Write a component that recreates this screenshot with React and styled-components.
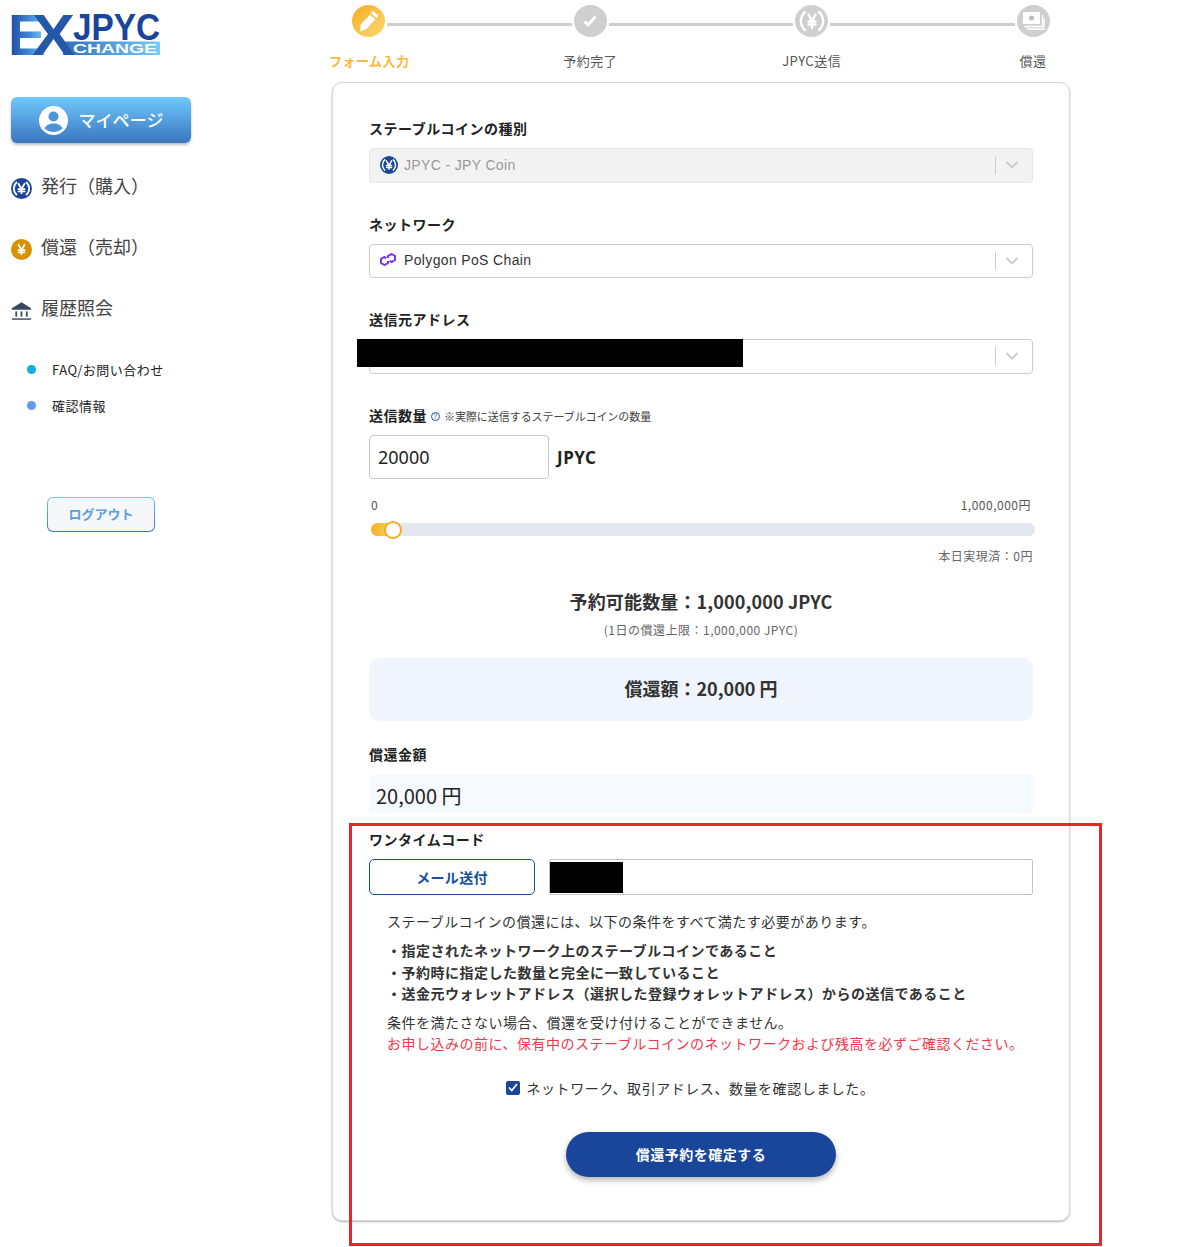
import styled, { createGlobalStyle } from "styled-components";
import { ChevronDown } from "lucide-react";

const FONT = `"Noto Sans CJK JP", "Noto Sans", sans-serif`;

const GlobalStyle = createGlobalStyle`
  body {
    margin: 0;
    background: #ffffff;
    font-family: ${FONT};
    color: #222222;
  }
`;

function YenMark({ color = "#ffffff" }) {
  return (
    <g fill="none" stroke={color} strokeWidth="2" strokeLinecap="round" strokeLinejoin="round">
      <path d="M8.500 6.500l3.500 6 3.500-6M12 12.500v5M8.500 12.800h7M8.500 15.400h7" />
    </g>
  );
}

function CoinIcon({ size = 21 }) {
  return (
    <svg width={size} height={size} viewBox="0 0 24 24">
      <circle cx="12" cy="12" r="12" fill="#1a4599" />
      <path d="M6.800 4.600a9.500 9.500 0 0 0 0 14.800M17.200 4.600a9.500 9.500 0 0 1 0 14.800" fill="none" stroke="#fff" strokeWidth="2" />
      <YenMark />
    </svg>
  );
}

function RedeemIcon() {
  return (
    <svg width="21" height="21" viewBox="0 0 24 24">
      <circle cx="12" cy="12" r="12" fill="#d99100" />
      <YenMark />
    </svg>
  );
}

function BankIcon() {
  return (
    <svg width="21" height="21" viewBox="0 0 24 24" fill="#34495e">
      <path d="M12 2.500L23 9.500V11H1V9.500z" />
      <rect x="5" y="13" width="2" height="6" />
      <rect x="11" y="13" width="2" height="6" />
      <rect x="17" y="13" width="2" height="6" />
      <rect x="1" y="21" width="22" height="1.600" />
    </svg>
  );
}

function UserIcon() {
  return (
    <svg width="29" height="29" viewBox="0 0 29 29">
      <circle cx="14.500" cy="14.500" r="14.500" fill="#ffffff" />
      <circle cx="14.500" cy="10.500" r="5" fill="#4c94d8" />
      <path d="M5.500 22.500c1.500-3.600 5-5 9-5s7.500 1.400 9 5c-2.400 2.300-5.600 3.500-9 3.500s-6.600-1.200-9-3.500z" fill="#4c94d8" />
    </svg>
  );
}

function PolygonIcon() {
  return (
    <PolygonSvg width="16" height="13" viewBox="0 0 16 13" fill="none" stroke="#7b2ff0" strokeWidth="2">
      <path d="M8 5V3L11.500 1L15 3V7L11.500 9L9.500 7.900" />
      <path d="M8 8V10L4.500 12L1 10V6L4.500 4L6.500 5.100" />
    </PolygonSvg>
  );
}

function StepGlyph({ kind }) {
  if (kind === "pencil") {
    return (
      <svg width="20" height="22" viewBox="0 0 20 22" fill="#ffffff">
        <path d="M14 1l5.500 4.500-2 2.500L12 3.500zM10.900 4.800l5.500 4.500-8.900 9.700-6.500 2.500.6-7z" />
      </svg>
    );
  }
  if (kind === "check") {
    return (
      <svg width="14" height="12" viewBox="0 0 14 12" fill="none" stroke="#ffffff" strokeWidth="2.800">
        <path d="M1.500 6.500L5 10L12.500 1.500" />
      </svg>
    );
  }
  if (kind === "yen") {
    return (
      <svg width="26" height="24" viewBox="0 0 26 24" fill="none" stroke="#ffffff" strokeWidth="2.400" strokeLinecap="round">
        <path d="M6 3a12 12 0 0 0 0 18M20 3a12 12 0 0 1 0 18M9.500 5.500L13 12l3.500-6.500M13 12v7M9.500 12.500h7M9.500 15.500h7" />
      </svg>
    );
  }
  return (
    <svg width="23" height="20" viewBox="0 0 23 20" fill="none">
      <rect x="1" y="1" width="17" height="12" fill="#ffffff" />
      <circle cx="9.500" cy="7" r="2.500" fill="#bdbdbd" />
      <path d="M20.500 4v11.500H2.500M22 7v11H5" stroke="#ffffff" strokeWidth="1.300" />
    </svg>
  );
}

function Logo() {
  return (
    <LogoSvg width="150" height="42" viewBox="0 0 150 42">
      <defs>
        <linearGradient id="logoE" x1="0" x2="1" y1="0" y2="0">
          <stop offset="0" stopColor="#1a4599" />
          <stop offset="0.55" stopColor="#3f86d4" />
          <stop offset="1" stopColor="#74ccff" />
        </linearGradient>
        <linearGradient id="logoBand" x1="0" x2="1" y1="0" y2="0">
          <stop offset="0" stopColor="#2f6fbd" />
          <stop offset="1" stopColor="#74ccff" />
        </linearGradient>
      </defs>
      <text x="-3" y="42" fontFamily="Liberation Sans" fontWeight="700" fontSize="58" fill="url(#logoE)" textLength="38" lengthAdjust="spacingAndGlyphs">E</text>
      <rect x="52" y="28.500" width="97" height="13.500" fill="url(#logoBand)" />
      <text x="21" y="42" fontFamily="Liberation Sans" fontWeight="700" fontSize="58" fill="#2458a8" textLength="43" lengthAdjust="spacingAndGlyphs">X</text>
      <text x="62" y="26.500" fontFamily="Liberation Sans" fontWeight="700" fontSize="37" fill="#1a4599" textLength="87" lengthAdjust="spacingAndGlyphs">JPYC</text>
      <text x="62" y="40" fontFamily="Liberation Sans" fontWeight="700" fontSize="13" fill="#ffffff" textLength="84" lengthAdjust="spacingAndGlyphs">CHANGE</text>
    </LogoSvg>
  );
}

function SelectField({ label, icon, value, disabled }) {
  return (
    <Field>
      <FieldLabel>{label}</FieldLabel>
      <SelectBox $disabled={disabled}>
        <SelectIcon>{icon}</SelectIcon>
        <SelectValue $disabled={disabled}>{value}</SelectValue>
        <SelectArrow>
          <ChevronDown size={20} strokeWidth={2.2} />
        </SelectArrow>
      </SelectBox>
    </Field>
  );
}

const steps = [
  { glyph: "pencil", label: "フォーム入力", active: true },
  { glyph: "check", label: "予約完了" },
  { glyph: "yen", label: "JPYC送信" },
  { glyph: "money", label: "償還" },
];

export default function App() {
  return (
    <Page>
      <GlobalStyle />
      <Sidebar>
        <Logo />
        <MyPageButton>
          <UserIcon />
          <span>マイページ</span>
        </MyPageButton>
        <NavList>
          <NavItem><CoinIcon /><span>発行（購入）</span></NavItem>
          <NavItem><RedeemIcon /><span>償還（売却）</span></NavItem>
          <NavItem><BankIcon /><span>履歴照会</span></NavItem>
        </NavList>
        <SubList>
          <SubItem><Dot $color="#12ade3" />FAQ/お問い合わせ</SubItem>
          <SubItem><Dot $color="#6699ee" />確認情報</SubItem>
        </SubList>
        <LogoutButton>ログアウト</LogoutButton>
      </Sidebar>

      <Main>
        <StepIcons>
          {steps.map((s, i) => (
            <StepSegment key={s.label} $last={i === steps.length - 1}>
              <StepCircle $active={s.active}><StepGlyph kind={s.glyph} /></StepCircle>
              {i < steps.length - 1 && <StepLine />}
            </StepSegment>
          ))}
        </StepIcons>
        <StepLabels>
          {steps.map((s) => (
            <StepLabel key={s.label} $active={s.active}>{s.label}</StepLabel>
          ))}
        </StepLabels>

        <Card>
          <SelectField label="ステーブルコインの種別" icon={<CoinIcon size={18} />} value="JPYC - JPY Coin" disabled />
          <SelectField label="ネットワーク" icon={<PolygonIcon />} value="Polygon PoS Chain" />
          <SelectField label="送信元アドレス" value="" />

          <AmountLabel>
            <AmountTitle>送信数量</AmountTitle>
            <HelpIcon>?</HelpIcon>
            <HelpText>※実際に送信するステーブルコインの数量</HelpText>
          </AmountLabel>
          <AmountRow>
            <AmountInput>20000</AmountInput>
            <AmountUnit>JPYC</AmountUnit>
          </AmountRow>

          <SliderScale>
            <span>0</span>
            <span>1,000,000円</span>
          </SliderScale>
          <SliderTrack>
            <SliderFill />
            <SliderThumb />
          </SliderTrack>
          <TodayNote>本日実現済：0円</TodayNote>

          <AvailableTitle>予約可能数量：1,000,000 JPYC</AvailableTitle>
          <AvailableNote>(1日の償還上限：1,000,000 JPYC)</AvailableNote>
          <RedeemBanner>償還額：20,000 円</RedeemBanner>

          <RedeemLabel>償還金額</RedeemLabel>
          <RedeemValue>20,000 円</RedeemValue>

          <OtpLabel>ワンタイムコード</OtpLabel>
          <OtpRow>
            <MailButton>メール送付</MailButton>
            <OtpInput />
          </OtpRow>

          <Notice>
            <NoticeLine>ステーブルコインの償還には、以下の条件をすべて満たす必要があります。</NoticeLine>
            <Conditions>
              <li>・指定されたネットワーク上のステーブルコインであること</li>
              <li>・予約時に指定した数量と完全に一致していること</li>
              <li>・送金元ウォレットアドレス（選択した登録ウォレットアドレス）からの送信であること</li>
            </Conditions>
            <NoticeLine>条件を満たさない場合、償還を受け付けることができません。</NoticeLine>
            <WarningLine>お申し込みの前に、保有中のステーブルコインのネットワークおよび残高を必ずご確認ください。</WarningLine>
          </Notice>

          <ConfirmRow>
            <CheckBox>
              <svg width="10" height="9" viewBox="0 0 10 9" fill="none" stroke="#fff" strokeWidth="1.700">
                <path d="M1 4.500L3.800 7.500L9 1" />
              </svg>
            </CheckBox>
            ネットワーク、取引アドレス、数量を確認しました。
          </ConfirmRow>
          <SubmitButton>償還予約を確定する</SubmitButton>
        </Card>
      </Main>

      <AddressMask />
      <OtpMask />
      <Annotation />
    </Page>
  );
}

const Page = styled.div`
  position: relative;
  display: flex;
  width: 1183px;
  height: 1247px;
  overflow: hidden;
`;

const Sidebar = styled.aside`
  width: 332px;
  flex: none;
  box-sizing: border-box;
  padding: 13px 0 0 11px;
`;

const LogoSvg = styled.svg`
  display: block;
  overflow: visible;
`;

const PolygonSvg = styled.svg`
  flex: none;
  margin: -3px 0 0 -2px;
`;

const MyPageButton = styled.div`
  display: flex;
  align-items: center;
  justify-content: center;
  gap: 10px;
  width: 180px;
  height: 46px;
  margin-top: 42px;
  padding-left: 1px;
  box-sizing: border-box;
  border-radius: 6px;
  background: linear-gradient(180deg, #6fc8fb 0%, #3a76c0 100%);
  box-shadow: 0 2px 3px rgba(0, 0, 0, 0.25);
  color: #ffffff;
  font-size: 17px;
  font-weight: 500;

  span {
    margin-top: -2px;
    letter-spacing: 0.1px;
  }
`;

const NavList = styled.div`
  display: flex;
  flex-direction: column;
  gap: 31px;
  margin-top: 27px;
`;

const NavItem = styled.div`
  display: flex;
  align-items: center;
  gap: 9px;
  height: 30px;
  color: #444444;
  font-size: 18px;

  svg {
    flex: none;
    margin-top: 6px;
  }
`;

const SubList = styled.div`
  display: flex;
  flex-direction: column;
  gap: 16px;
  margin-top: 37px;
  padding-left: 16px;
`;

const SubItem = styled.div`
  display: flex;
  align-items: center;
  height: 20px;
  color: #222222;
  font-size: 13px;
  letter-spacing: 0.5px;
`;

const Dot = styled.span`
  width: 9px;
  height: 9px;
  margin-right: 16px;
  border-radius: 50%;
  background: ${({ $color }) => $color};
`;

const LogoutButton = styled.div`
  display: flex;
  align-items: center;
  justify-content: center;
  width: 108px;
  height: 35px;
  margin: 82px 0 0 36px;
  padding-bottom: 3px;
  box-sizing: border-box;
  border: 1px solid transparent;
  border-radius: 6px;
  background: linear-gradient(#f5f7fa, #f5f7fa) padding-box,
    linear-gradient(180deg, #74c6f7, #3a76c0) border-box;
  color: #5c9fdc;
  font-size: 13px;
  font-weight: 700;
`;

const Main = styled.main`
  width: 738px;
  flex: none;
`;

const StepIcons = styled.div`
  display: flex;
  align-items: flex-start;
  height: 42px;
  padding: 5px 20px 0;
  box-sizing: border-box;
`;

const StepSegment = styled.div`
  display: flex;
  flex: ${({ $last }) => ($last ? "none" : "1")};
  align-items: center;
`;

const StepCircle = styled.div`
  display: flex;
  flex: none;
  align-items: center;
  justify-content: center;
  width: 33px;
  height: 32px;
  border-radius: 50%;
  background: ${({ $active }) => ($active ? "linear-gradient(135deg, #f6ae1f, #fdd877)" : "#cfcfcf")};
`;

const StepLine = styled.div`
  flex: 1;
  height: 3px;
  margin: 6px 2px 0;
  background: #cfcfcf;
`;

const StepLabels = styled.div`
  display: flex;
  justify-content: space-between;
  margin: 9px -3px 0;
`;

const StepLabel = styled.div`
  width: 80px;
  text-align: center;
  white-space: nowrap;
  font-size: 13px;
  line-height: 19px;
  letter-spacing: 0.5px;
  font-weight: ${({ $active }) => ($active ? 700 : 400)};
  color: ${({ $active }) => ($active ? "#fab83a" : "#555555")};
`;

const Card = styled.section`
  height: 1139px;
  margin-top: 12px;
  padding: 0 36px;
  box-sizing: border-box;
  border: 1px solid #d8d8de;
  border-radius: 10px;
  box-shadow: 0 1px 2px rgba(0, 0, 0, 0.3);
  background: #ffffff;
  overflow: hidden;
  letter-spacing: 0.5px;
`;

const Field = styled.div`
  margin-top: 29px;

  &:first-child {
    margin-top: 33px;
  }
`;

const FieldLabel = styled.div`
  font-size: 14px;
  line-height: 24px;
  font-weight: 700;
  color: #222222;
  margin-bottom: 8px;
`;

const SelectBox = styled.div`
  display: flex;
  align-items: center;
  height: 34.500px;
  box-sizing: border-box;
  padding-left: 10px;
  border: 1px solid ${({ $disabled }) => ($disabled ? "#e6e6e6" : "#cccccc")};
  border-radius: 4px;
  background: ${({ $disabled }) => ($disabled ? "#f2f2f2" : "#ffffff")};
`;

const SelectIcon = styled.span`
  display: flex;
  align-items: center;
  justify-content: center;
  width: 18px;
  height: 18px;
  margin-right: 6px;
`;

const SelectValue = styled.span`
  flex: 1;
  margin-top: -1px;
  font-family: "Liberation Sans", sans-serif;
  font-size: 14px;
  letter-spacing: 0.35px;
  color: ${({ $disabled }) => ($disabled ? "#999999" : "#333333")};
`;

const SelectArrow = styled.span`
  display: flex;
  align-items: center;
  justify-content: center;
  width: 37px;
  height: 18px;
  box-sizing: border-box;
  padding-right: 4px;
  border-left: 1px solid #cccccc;
  color: #cccccc;
`;

const AmountLabel = styled.div`
  display: flex;
  align-items: center;
  gap: 4px;
  height: 24px;
  margin-top: 29.500px;
`;

const AmountTitle = styled(FieldLabel)`
  margin: 0;
`;

const HelpIcon = styled.span`
  display: inline-flex;
  align-items: center;
  justify-content: center;
  width: 7px;
  height: 7px;
  margin-top: 2px;
  border: 1px solid #1a5aa8;
  border-radius: 50%;
  color: #1a5aa8;
  font-size: 7px;
  line-height: 1;
  letter-spacing: 0;
`;

const HelpText = styled.span`
  margin-top: 2px;
  font-size: 11px;
  letter-spacing: -0.05px;
  color: #444444;
`;

const AmountRow = styled.div`
  display: flex;
  align-items: center;
  gap: 8px;
  margin-top: 8px;
`;

const AmountInput = styled.div`
  display: flex;
  align-items: center;
  width: 180px;
  height: 44px;
  box-sizing: border-box;
  padding-left: 8px;
  border: 1px solid #c8c8c8;
  border-radius: 4px;
  font-family: "Noto Sans", sans-serif;
  font-size: 18px;
  letter-spacing: 0;
  color: #222222;
`;

const AmountUnit = styled.span`
  font-family: "Noto Sans", sans-serif;
  font-size: 17px;
  font-weight: 700;
  color: #222222;
`;

const SliderScale = styled.div`
  display: flex;
  justify-content: space-between;
  margin-top: 17px;
  padding: 0 2px;
  font-size: 12px;
  line-height: 18px;
  color: #555555;
`;

const SliderTrack = styled.div`
  position: relative;
  height: 13px;
  margin: 9px -2px 0 2px;
  border-radius: 7px;
  background: #e4e7ef;
`;

const SliderFill = styled.div`
  width: 24px;
  height: 100%;
  border-radius: 7px 0 0 7px;
  background: linear-gradient(90deg, #f6ae1f, #fdd877);
`;

const SliderThumb = styled.div`
  position: absolute;
  left: 13px;
  top: -2px;
  width: 18px;
  height: 18px;
  box-sizing: border-box;
  border: 2px solid #f6ae1f;
  border-radius: 50%;
  background: #ffffff;
`;

const TodayNote = styled.div`
  margin-top: 11px;
  text-align: right;
  font-size: 12px;
  line-height: 18px;
  color: #666666;
`;

const AvailableTitle = styled.div`
  margin-top: 22px;
  text-align: center;
  font-size: 18px;
  line-height: 28px;
  font-weight: 700;
  letter-spacing: 0.13px;
  color: #333333;
`;

const AvailableNote = styled.div`
  margin-top: 6px;
  text-align: center;
  font-size: 12px;
  line-height: 18px;
  color: #666666;
`;

const RedeemBanner = styled.div`
  display: flex;
  align-items: center;
  justify-content: center;
  height: 63px;
  margin-top: 19px;
  padding-bottom: 3px;
  box-sizing: border-box;
  border-radius: 10px;
  background: #eff4fd;
  font-size: 18px;
  font-weight: 700;
  letter-spacing: 0;
  color: #333333;
`;

const RedeemLabel = styled(FieldLabel)`
  margin: 21px 0 0;
`;

const RedeemValue = styled.div`
  display: flex;
  align-items: center;
  height: 38px;
  margin-top: 9px;
  padding: 2px 0 0 7px;
  box-sizing: border-box;
  background: #f6f9fd;
  font-size: 20px;
  letter-spacing: 0;
  color: #222222;
`;

const OtpLabel = styled(FieldLabel)`
  margin: 14px 0 0;
`;

const OtpRow = styled.div`
  display: flex;
  gap: 14px;
  margin-top: 8px;
`;

const MailButton = styled.div`
  display: flex;
  align-items: center;
  justify-content: center;
  width: 166px;
  height: 36px;
  box-sizing: border-box;
  border: 1px solid #17509c;
  border-radius: 5px;
  color: #17509c;
  font-size: 14px;
  font-weight: 700;
  letter-spacing: 0.3px;
`;

const OtpInput = styled.div`
  flex: 1;
  height: 36px;
  box-sizing: border-box;
  border: 1px solid #c4c4c4;
  border-radius: 2px;
`;

const Notice = styled.div`
  margin-top: 16px;
  padding-left: 18px;
  font-size: 14px;
  line-height: 21px;
  color: #333333;
`;

const NoticeLine = styled.div``;

const WarningLine = styled.div`
  color: #f0384b;
`;

const Conditions = styled.ul`
  margin: 8px 0 7px;
  padding: 0;
  list-style: none;
  font-weight: 700;
  line-height: 21.500px;
`;

const ConfirmRow = styled.div`
  display: flex;
  align-items: center;
  justify-content: center;
  gap: 7px;
  margin-top: 24px;
  padding-right: 22px;
  font-size: 14px;
  line-height: 21px;
  letter-spacing: 0.55px;
  color: #333333;
`;

const CheckBox = styled.span`
  display: flex;
  align-items: center;
  justify-content: center;
  width: 14px;
  height: 14px;
  margin-top: -1px;
  border-radius: 2px;
  background: #1a4599;
`;

const SubmitButton = styled.div`
  display: flex;
  align-items: center;
  justify-content: center;
  width: 270px;
  height: 45px;
  margin: 33px auto 0;
  border-radius: 23px;
  background: #19459a;
  box-shadow: 0 3px 6px rgba(0, 0, 0, 0.3);
  color: #ffffff;
  font-size: 14px;
  font-weight: 700;
`;

const AddressMask = styled.div`
  position: absolute;
  left: 357px;
  top: 339px;
  width: 386px;
  height: 28px;
  background: #000000;
`;

const OtpMask = styled.div`
  position: absolute;
  left: 550px;
  top: 862px;
  width: 73px;
  height: 31px;
  background: #000000;
`;

const Annotation = styled.div`
  position: absolute;
  left: 349px;
  top: 823px;
  width: 753px;
  height: 423px;
  box-sizing: border-box;
  border: 3px solid #e6252a;
  pointer-events: none;
`;
